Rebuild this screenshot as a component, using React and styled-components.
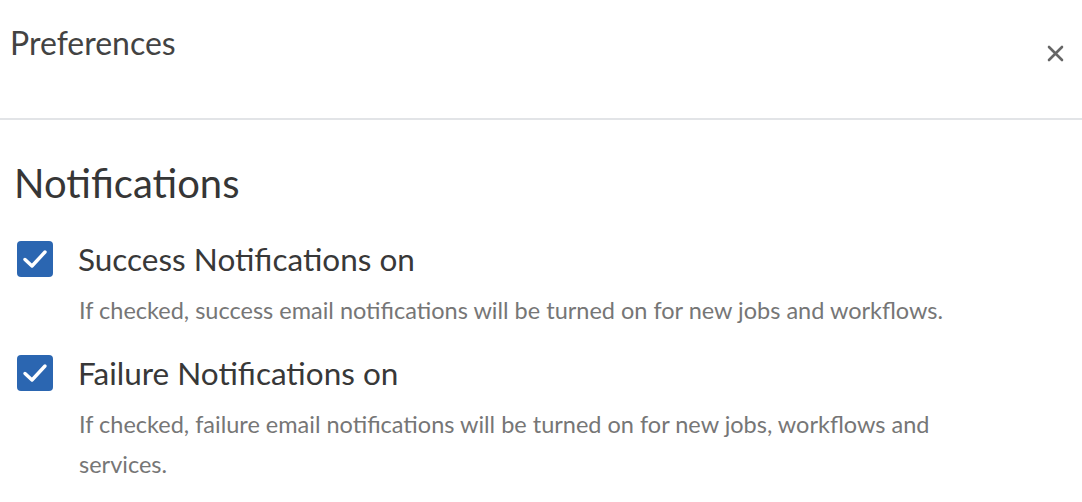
import React from 'react';
import styled, { createGlobalStyle } from 'styled-components';

const GlobalStyle = createGlobalStyle`
  html, body {
    margin: 0;
    padding: 0;
    background: #fff;
  }
  body {
    font-family: Lato, "Open Sans", sans-serif;
  }
`;

const Page = styled.div`
  width: 100%;
  min-height: 100vh;
  background: #fff;
  display: flex;
  flex-direction: column;
`;

const Header = styled.div`
  height: 120px;
  box-sizing: border-box;
  padding: 23px 16px 0 10px;
  display: flex;
  align-items: flex-start;
  justify-content: space-between;
  border-bottom: 2px solid #e2e4e7;
`;

const HeaderTitle = styled.h1`
  margin: 0;
  font-size: 32px;
  font-weight: 400;
  line-height: 40px;
  color: #434343;
`;

const CloseButton = styled.button`
  margin-top: 19px;
  width: 22px;
  height: 22px;
  padding: 0;
  border: none;
  background: none;
  display: flex;
  align-items: center;
  justify-content: center;
  cursor: pointer;
`;

const Body = styled.div`
  padding: 39px 16px 0 14px;
  display: flex;
  flex-direction: column;
`;

const SectionTitle = styled.h2`
  margin: 0 0 32px;
  font-size: 40px;
  font-weight: 400;
  line-height: 48px;
  color: #363636;
`;

const Option = styled.div`
  display: flex;
  flex-direction: column;
  margin-bottom: ${p => p.gap || 0}px;
`;

const OptionRow = styled.label`
  display: flex;
  align-items: center;
  gap: 25px;
  padding-left: 3px;
  cursor: pointer;
`;

const Box = styled.span`
  width: 36px;
  height: 36px;
  border-radius: 4px;
  background: ${p => (p.checked ? '#2b66b1' : '#fff')};
  border: ${p => (p.checked ? 'none' : '2px solid #999')};
  box-sizing: border-box;
  display: flex;
  align-items: center;
  justify-content: center;
  flex-shrink: 0;
`;

const OptionLabel = styled.span`
  font-size: 31.5px;
  line-height: 40px;
  color: #383838;
`;

const OptionHelp = styled.p`
  margin: 11px 0 0 65px;
  max-width: 930px;
  font-size: 23.5px;
  line-height: 40px;
  color: #767676;
`;

function CheckMark() {
  return (
    <svg width="26" height="22" viewBox="0 0 26 22" fill="none">
      <path d="M3 11.5 L10 18 L23 4" stroke="#fff" strokeWidth="3.4" strokeLinecap="round" strokeLinejoin="round" />
    </svg>
  );
}

function CloseIcon() {
  return (
    <svg width="17" height="17" viewBox="0 0 17 17">
      <path d="M2 2 L15 15 M15 2 L2 15" stroke="#666" strokeWidth="2.6" strokeLinecap="round" />
    </svg>
  );
}

const options = [
  {
    id: 'success',
    label: 'Success Notifications on',
    help: 'If checked, success email notifications will be turned on for new jobs and workflows.',
  },
  {
    id: 'failure',
    label: 'Failure Notifications on',
    help: 'If checked, failure email notifications will be turned on for new jobs, workflows and services.',
  },
];

export default function App() {
  const [checked, setChecked] = React.useState({ success: true, failure: true });

  return (
    <Page>
      <GlobalStyle />
      <Header>
        <HeaderTitle>Preferences</HeaderTitle>
        <CloseButton aria-label="Close">
          <CloseIcon />
        </CloseButton>
      </Header>
      <Body>
        <SectionTitle>Notifications</SectionTitle>
        {options.map((o, i) => (
          <Option key={o.id} gap={i === 0 ? 23 : 0}>
            <OptionRow onClick={() => setChecked(c => ({ ...c, [o.id]: !c[o.id] }))}>
              <Box checked={checked[o.id]}>{checked[o.id] && <CheckMark />}</Box>
              <OptionLabel>{o.label}</OptionLabel>
            </OptionRow>
            <OptionHelp>{o.help}</OptionHelp>
          </Option>
        ))}
      </Body>
    </Page>
  );
}
